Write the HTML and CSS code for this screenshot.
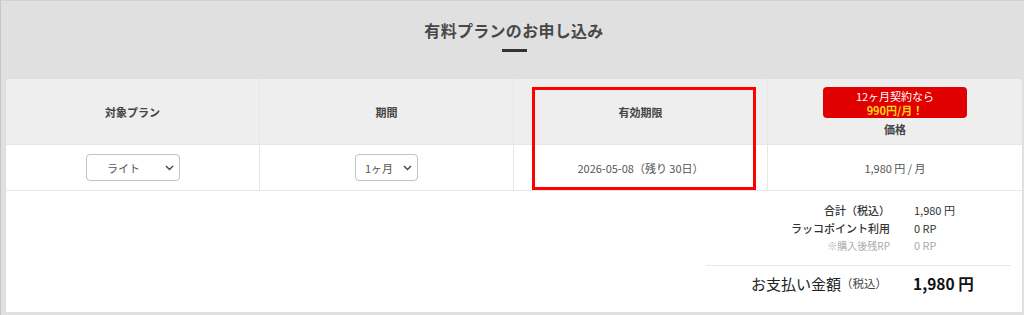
FILE: index.html
```html
<!DOCTYPE html>
<html lang="ja">

<head>
  <meta charset="UTF-8">
  <meta name="viewport" content="width=device-width, initial-scale=1.0">
  <title>有料プランのお申し込み</title>
  <link rel="stylesheet" href="styles.css">
</head>

<body>
  <div class="page">
    <div class="page-head">
      <h1>有料プランのお申し込み</h1>
      <span class="head-bar"></span>
    </div>

    <div class="card">
      <div class="plan-table">
        <div class="cell head">対象プラン</div>
        <div class="cell head">期間</div>
        <div class="cell head">有効期限</div>
        <div class="cell head price-head">
          <div class="badge">
            <span>12ヶ月契約なら</span>
            <strong>990円/月！</strong>
          </div>
          <span>価格</span>
        </div>

        <div class="cell body">
          <div class="select-wrap">
            <select class="plan-select">
              <option>ライト</option>
              <option>スタンダード</option>
            </select>
            <svg class="chevron" width="9" height="6" viewBox="0 0 9 6"><path d="M1 1l3.5 3.5L8 1" fill="none" stroke="#444" stroke-width="1.4"/></svg>
          </div>
        </div>
        <div class="cell body">
          <div class="select-wrap">
            <select class="term-select">
              <option>1ヶ月</option>
              <option>12ヶ月</option>
            </select>
            <svg class="chevron" width="9" height="6" viewBox="0 0 9 6"><path d="M1 1l3.5 3.5L8 1" fill="none" stroke="#444" stroke-width="1.4"/></svg>
          </div>
        </div>
        <div class="cell body">2026-05-08（残り 30日）</div>
        <div class="cell body">1,980 円 / 月</div>
      </div>

      <div class="summary">
        <div class="summary-grid">
          <span class="label">合計（税込）</span>
          <span class="value">1,980 円</span>
          <span class="label">ラッコポイント利用</span>
          <span class="value">0 RP</span>
          <span class="label muted">※購入後残RP</span>
          <span class="value muted">0 RP</span>
          <span class="label total">お支払い金額<small>（税込）</small></span>
          <span class="value total">1,980 円</span>
        </div>
      </div>

      <div class="mark"></div>
    </div>
  </div>
</body>

</html>
```

FILE: styles.css
```css
* {
  margin: 0;
  padding: 0;
  box-sizing: border-box;
  font-family: 'Noto Sans CJK JP', 'Noto Sans', sans-serif;
}

body {
  background: #e0e0e0;
  overflow: hidden;
}

.page {
  min-height: 315px;
  border-top: 1px solid #d2d2d2;
  border-left: 1px solid #c6c6c6;
  padding: 0 2px 0 5px;
  background: #e0e0e0;
}

.page-head {
  display: flex;
  flex-direction: column;
  align-items: center;
  padding-top: 17px;
  height: 78px;
}

.page-head h1 {
  font-size: 16px;
  line-height: 24px;
  font-weight: bold;
  color: #484848;
  letter-spacing: 0.3px;
}

.head-bar {
  display: block;
  width: 25px;
  height: 3px;
  margin-top: 7px;
  background: #333;
}

.card {
  position: relative;
  background: #fff;
  border-radius: 4px 4px 0 0;
  height: 233px;
}

.plan-table {
  display: grid;
  grid-template-columns: repeat(4, 1fr);
}

.cell {
  display: flex;
  align-items: center;
  justify-content: center;
  border-right: 1px solid #e6e6e6;
  border-bottom: 1px solid #e6e6e6;
  font-size: 11px;
  color: #555;
}

.cell:nth-child(4n) {
  border-right: 0;
}

.cell.head {
  height: 66px;
  background: #eeeeee;
  font-weight: bold;
  color: #444;
}

.cell.head:first-child {
  border-radius: 4px 0 0 0;
}

.cell.price-head {
  flex-direction: column;
  border-radius: 0 4px 0 0;
}

.badge {
  display: flex;
  flex-direction: column;
  align-items: center;
  width: 144px;
  height: 31px;
  padding-top: 2px;
  margin-bottom: 3px;
  background: #e00000;
  border-radius: 4px;
  color: #fff;
  font-weight: normal;
  font-size: 11px;
  line-height: 14px;
}

.badge strong {
  color: #ffd21a;
  font-weight: bold;
}

.cell.body {
  height: 46px;
}

.select-wrap {
  position: relative;
  display: flex;
}

.select-wrap select {
  appearance: none;
  -webkit-appearance: none;
  height: 27px;
  border: 1px solid #c2c2c2;
  border-radius: 4px;
  background: #fff;
  font-size: 11px;
  color: #555;
  outline: none;
}

.plan-select {
  width: 94px;
  padding: 0 18px 0 0;
  text-align: center;
  text-align-last: center;
}

.term-select {
  width: 63px;
  padding: 0 0 0 9px;
}

.chevron {
  position: absolute;
  right: 6px;
  top: 11px;
  pointer-events: none;
}

.summary {
  display: flex;
  justify-content: flex-end;
  padding: 11px 11px 0 0;
}

.summary-grid {
  display: grid;
  grid-template-columns: 184px 97px;
  column-gap: 24px;
  font-size: 11px;
  line-height: 17.5px;
  color: #333;
}

.summary-grid .label {
  text-align: right;
  font-weight: 500;
}

.summary-grid .muted {
  color: #aaa;
  font-size: 10px;
  font-weight: normal;
}

.summary-grid .value.muted {
  font-size: 11px;
}

.summary-grid .total {
  margin-top: 10px;
  border-top: 1px solid #e6e6e6;
  height: 37px;
  display: flex;
  align-items: center;
  font-size: 15px;
  color: #222;
}

.summary-grid .label.total {
  justify-content: flex-end;
  padding-right: 3px;
  font-weight: normal;
}

.summary-grid .total small {
  font-size: 11.5px;
  color: #444;
}

.summary-grid .value.total {
  margin-left: -24px;
  padding-left: 23px;
  font-size: 15.5px;
  font-weight: bold;
  color: #111;
}

.mark {
  position: absolute;
  left: 526px;
  top: 8px;
  width: 224px;
  height: 103px;
  border: 3px solid #ff0000;
}
```
